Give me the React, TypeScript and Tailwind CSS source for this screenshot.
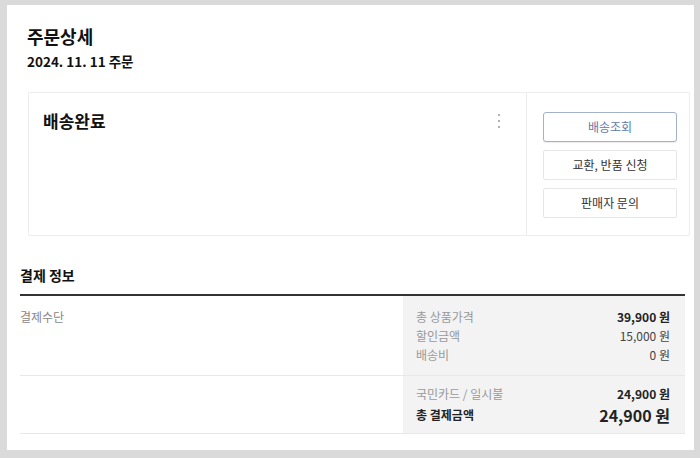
import React from 'react'

const font = { fontFamily: '"Noto Sans CJK KR", "Noto Sans", sans-serif' }

const ActionButton = ({ label, primary }: { label: string; primary?: boolean }) => (
  <button
    className={
      primary
        ? 'h-[30px] w-[134px] rounded-[3px] border border-[#a3b1c9] bg-white text-[12px] text-[#5b78ad] shadow-[0_1px_1px_rgba(0,0,0,0.08)]'
        : 'h-[30px] w-[134px] rounded-[2px] border border-[#e6e6e6] bg-white text-[12px] text-[#333]'
    }
  >
    {label}
  </button>
)

const PriceRow = ({ label, value, strong }: { label: string; value: string; strong?: boolean }) => (
  <div className="flex justify-between leading-[19px] text-[12px]">
    <span className="text-[#999]">{label}</span>
    <span className={strong ? 'font-bold text-[#222]' : 'text-[#444]'}>{value}</span>
  </div>
)

const App = () => {
  return (
    <div className="h-[458px] w-[700px] bg-[#dadada] pt-[5px] pl-[7px] pr-[6px] pb-[8px]" style={font}>
      <div className="h-full bg-white">
        {/* order header */}
        <div className="pl-[21px] pr-[4px] pt-[18px]">
          <h1 className="-ml-px text-[18px] leading-[26px] font-bold text-[#111]">주문상세</h1>
          <p className="-ml-px mt-[3px] text-[13.5px] leading-[18px] font-bold text-[#111]">2024. 11. 11 주문</p>

          <div className="mt-[22px] flex h-[144px] rounded-[2px] border border-[#ededed]">
            <div className="flex flex-1 items-start justify-between pl-[14px] pr-[26px] pt-[16px]">
              <h2 className="text-[17px] leading-[24px] font-bold text-[#111]">배송완료</h2>
              <div className="mt-[5px] flex flex-col gap-[4px]">
                <span className="h-[2px] w-[2px] rounded-full bg-[#999]" />
                <span className="h-[2px] w-[2px] rounded-full bg-[#999]" />
                <span className="h-[2px] w-[2px] rounded-full bg-[#999]" />
              </div>
            </div>
            <div className="flex w-[163px] flex-col gap-2 border-l border-[#ededed] pl-[16px] pt-[19px]">
              <ActionButton label="배송조회" primary />
              <ActionButton label="교환, 반품 신청" />
              <ActionButton label="판매자 문의" />
            </div>
          </div>
        </div>

        {/* payment info */}
        <div className="mt-[29px] pl-[13px] pr-[9px]">
          <h3 className="border-b-2 border-[#333] pb-[9px] text-[14px] leading-[20px] font-bold text-[#111]">결제 정보</h3>

          <div className="grid grid-cols-[383px_1fr]">
            <div className="border-b border-[#e8e8e8] pt-[11px] text-[12px] leading-[19px] text-[#888]">결제수단</div>
            <div className="border-b border-[#e8e8e8] bg-[#f3f3f3] pl-[13px] pr-[15px] pt-[11px] pb-[11px]">
              <PriceRow label="총 상품가격" value="39,900 원" strong />
              <PriceRow label="할인금액" value="15,000 원" />
              <PriceRow label="배송비" value="0 원" />
            </div>

            <div className="border-b border-[#e8e8e8]" />
            <div className="border-b border-[#e8e8e8] bg-[#f3f3f3] pl-[13px] pr-[15px] pt-[8px] pb-[6px]">
              <PriceRow label="국민카드 / 일시불" value="24,900 원" strong />
              <div className="flex items-center justify-between">
                <span className="text-[12px] font-bold text-[#222]">총 결제금액</span>
                <span className="text-[16px] leading-[24px] font-semibold text-[#222]">24,900 원</span>
              </div>
            </div>
          </div>
        </div>
      </div>
    </div>
  )
}

export default App
